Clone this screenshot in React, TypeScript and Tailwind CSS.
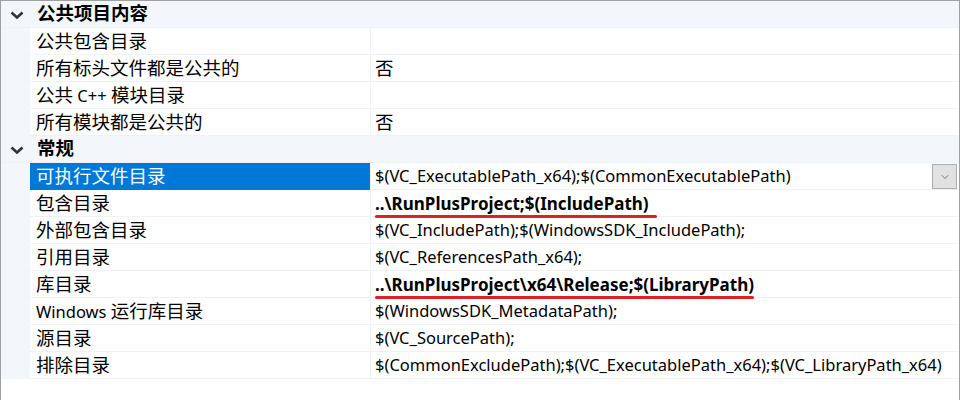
import { ChevronDown } from "lucide-react"

type Row = {
  name: string
  value?: string
  bold?: boolean
  underline?: number
  selected?: boolean
}

const groups: { title: string; rows: Row[] }[] = [
  {
    title: "公共项目内容",
    rows: [
      { name: "公共包含目录" },
      { name: "所有标头文件都是公共的", value: "否" },
      { name: "公共 C++ 模块目录" },
      { name: "所有模块都是公共的", value: "否" },
    ],
  },
  {
    title: "常规",
    rows: [
      { name: "可执行文件目录", value: "$(VC_ExecutablePath_x64);$(CommonExecutablePath)", selected: true },
      { name: "包含目录", value: "..\\RunPlusProject;$(IncludePath)", bold: true, underline: 282 },
      { name: "外部包含目录", value: "$(VC_IncludePath);$(WindowsSDK_IncludePath);" },
      { name: "引用目录", value: "$(VC_ReferencesPath_x64);" },
      { name: "库目录", value: "..\\RunPlusProject\\x64\\Release;$(LibraryPath)", bold: true, underline: 379 },
      { name: "Windows 运行库目录", value: "$(WindowsSDK_MetadataPath);" },
      { name: "源目录", value: "$(VC_SourcePath);" },
      { name: "排除目录", value: "$(CommonExcludePath);$(VC_ExecutablePath_x64);$(VC_LibraryPath_x64)" },
    ],
  },
]

// CJK runs are a bit larger than the latin ones, like Microsoft YaHei UI next to Segoe UI
function Txt({ text, bold }: { text?: string; bold?: boolean }) {
  if (!text) return null
  const parts = text.split(/([\u4e00-\u9fff]+)/).filter(Boolean)
  return (
    <span className={`leading-none whitespace-nowrap ${bold ? "font-bold" : ""}`}>
      {parts.map((p, i) =>
        /[\u4e00-\u9fff]/.test(p) ? (
          <span key={i} className="text-[18.5px]">
            {p}
          </span>
        ) : (
          <span key={i}>{p}</span>
        )
      )}
    </span>
  )
}

function Chevron() {
  return (
    <svg width="14" height="8" viewBox="0 0 14 8" className="mt-[1px]">
      <polyline points="1.5,1.5 7,6.5 12.5,1.5" fill="none" stroke="#333" strokeWidth="2.6" />
    </svg>
  )
}

export default function App() {
  return (
    <div
      className="w-[960px] h-[400px] bg-white border-t border-l border-r border-[#a0a0a0] overflow-hidden text-[16.5px] text-black"
      style={{ fontFamily: '"Noto Sans", "Noto Sans CJK SC", sans-serif' }}
    >
      {groups.map((g) => (
        <div key={g.title}>
          <div className="h-[27px] flex items-center bg-[#f3f6fa] border-b border-[#eef1f5]">
            <div className="w-[32px] flex justify-center pr-[1px]">
              <Chevron />
            </div>
            <span className="pl-[4px]">
              <Txt text={g.title} bold />
            </span>
          </div>
          {g.rows.map((r) => (
            <div key={r.name} className="h-[27px] flex">
              <div className="w-[29px] shrink-0 bg-[#f3f6fa]" />
              <div
                className={`w-[340px] shrink-0 flex items-center pl-[6px] border-b ${
                  r.selected ? "bg-[#0078d7] text-white border-[#0078d7]" : "border-[#eef1f5]"
                }`}
              >
                <Txt text={r.name} />
              </div>
              <div className="w-px shrink-0 bg-[#eef1f5]" />
              <div
                className={`flex-1 relative flex items-center pl-[4px] border-b border-[#eef1f5] ${
                  r.bold ? "text-[17px]" : ""
                }`}
              >
                <Txt text={r.value} bold={r.bold} />
                {r.underline && (
                  <div
                    className="absolute left-[4px] bottom-[-2px] h-[3px] rounded-full bg-[#e02020] z-10"
                    style={{ width: r.underline }}
                  />
                )}
                {r.selected && (
                  <div className="absolute right-[2px] top-[1px] w-[25px] h-[25px] bg-[#e1e1e1] border border-[#adadad] flex items-center justify-center">
                    <ChevronDown className="w-[12px] h-[12px] text-[#555]" strokeWidth={1.5} />
                  </div>
                )}
              </div>
            </div>
          ))}
        </div>
      ))}
    </div>
  )
}
